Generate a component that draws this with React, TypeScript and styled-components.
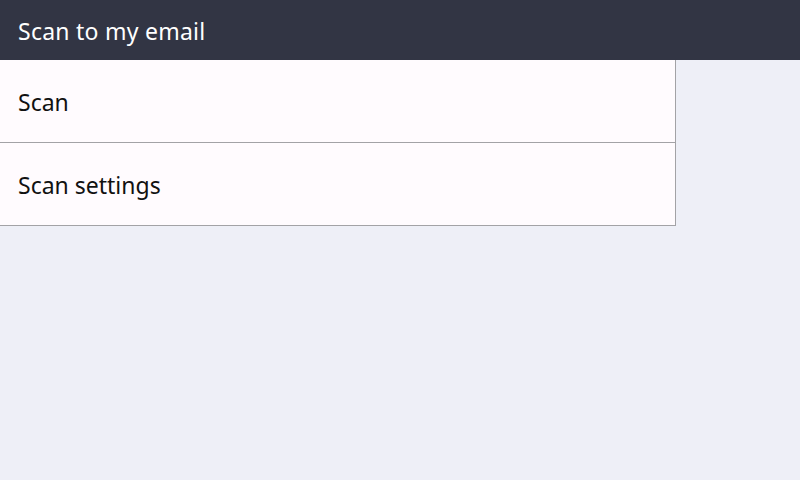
import styled, { createGlobalStyle } from 'styled-components';

const GlobalSt = createGlobalStyle`
  html, body {
    margin: 0;
    padding: 0;
    width: 800px;
    height: 480px;
    overflow: hidden;
    background: #eeeff7;
    font-family: 'Noto Sans', 'Open Sans', sans-serif;
  }
`;

const items = ['Scan', 'Scan settings'];

export default function App() {
  return (
    <>
      <GlobalSt />
      <ScreenSt>
        <HeaderSt>
          <TitleSt>Scan to my email</TitleSt>
        </HeaderSt>
        <MenuListSt>
          {items.map((text) => (
            <MenuRowSt key={text}>{text}</MenuRowSt>
          ))}
        </MenuListSt>
      </ScreenSt>
    </>
  );
}

const ScreenSt = styled.div`
  width: 800px;
  height: 480px;
  display: flex;
  flex-direction: column;
`;
const HeaderSt = styled.header`
  height: 60px;
  background: #323544;
  display: flex;
  align-items: center;
  padding: 2px 18px 0;
  box-sizing: border-box;
`;
const TitleSt = styled.h1`
  margin: 0;
  font-size: 23px;
  font-weight: 400;
  letter-spacing: 0.25px;
  color: #ffffff;
`;
const MenuListSt = styled.ul`
  list-style: none;
  margin: 0;
  padding: 0;
  width: 676px;
  box-sizing: border-box;
  border-right: 1px solid #a3a2a6;
  background: #fffbfe;
`;
const MenuRowSt = styled.li`
  height: 83px;
  box-sizing: border-box;
  border-bottom: 1px solid #a3a2a6;
  display: flex;
  align-items: center;
  padding: 2px 18px 0;
  font-size: 23px;
  color: #111111;
`;
